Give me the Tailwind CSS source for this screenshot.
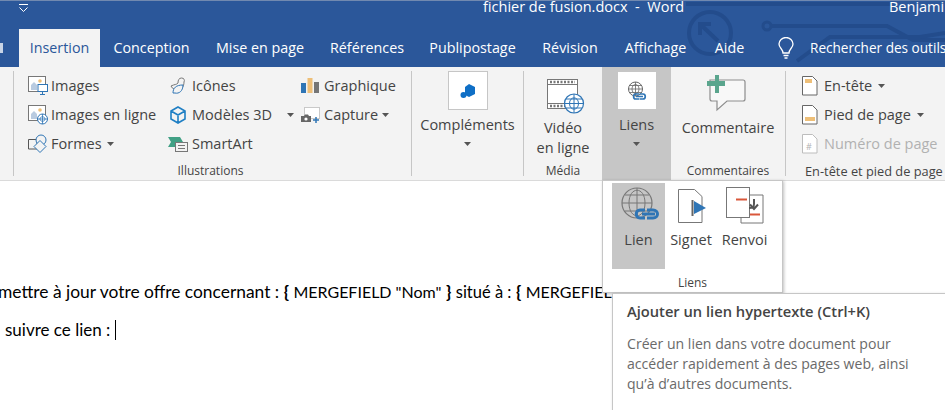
<!DOCTYPE html>
<html lang="fr">
<head>
  <meta charset="UTF-8">
  <title>fichier de fusion.docx - Word</title>
  <script src="https://cdn.jsdelivr.net/npm/@tailwindcss/browser@4"></script>
</head>
<body class="bg-white w-[945px] h-[410px] overflow-hidden relative [font-family:'Open_Sans',sans-serif] text-[14.500px] text-[#444]">

  <!-- Title bar + tabs -->
  <div class="relative h-[67px] bg-[#2b579a] border-t border-[#7189b0] overflow-hidden">
    <svg class="absolute left-[640px] top-0" width="305" height="66" fill="none" stroke="#234c8c" stroke-width="4">
      <circle cx="70" cy="32" r="21"/>
      <path d="M78 40 L60 23 M60 34 V23 H71" stroke-width="4"/>
      <circle cx="127" cy="25" r="4" stroke-width="3"/>
      <path d="M131 25 H247 L273 39 H305"/>
      <path d="M46 3 H250 M157 60 L190 36 H280 L305 32"/>
    </svg>
    <div class="relative flex h-[32px] -mt-[4px] text-white">
      <svg class="ml-[18px] mt-[7px] shrink-0" width="11" height="9" fill="none" stroke="#fff" stroke-width="1"><path d="M1 .5H10M1.500 3.500 5.500 7.500 9.500 3.500"/></svg>
      <div class="ml-[454px] w-[200px] whitespace-pre leading-[20px]">fichier de fusion.docx  -  Word</div>
      <div class="ml-[206px] whitespace-nowrap leading-[20px]">Benjamin</div>
    </div>
    <div class="relative flex h-[39px] text-white text-[14.300px] leading-[38px] whitespace-nowrap">
      <div class="w-[3px] shrink-0 mt-[14px] h-[10px] bg-[#c8d4e6]"></div>
      <div class="ml-[16px] w-[81px] shrink-0 h-[39px] bg-[#f3f3f3] text-[#2b579a] text-center">Insertion</div>
      <div class="w-[103px] shrink-0 text-center">Conception</div>
      <div class="w-[114px] shrink-0 text-center">Mise en page</div>
      <div class="w-[100px] shrink-0 text-center">Références</div>
      <div class="w-[111px] shrink-0 text-center">Publipostage</div>
      <div class="w-[84px] shrink-0 text-center">Révision</div>
      <div class="w-[87px] shrink-0 text-center">Affichage</div>
      <div class="w-[61px] shrink-0 text-center">Aide</div>
      <svg class="ml-[17px] mt-[8px] shrink-0" width="18" height="23" fill="none" stroke="#fff" stroke-width="1.300"><path d="M6 16C6 12 2 11 2 7A7 6.500 0 0 1 16 7C16 11 12 12 12 16ZM6.500 18.500H11.500M7.500 21H10.500"/></svg>
      <div class="ml-[15px] shrink-0 text-[13.600px]">Rechercher des outils</div>
    </div>
  </div>

  <!-- Ribbon -->
  <div class="flex h-[114px] bg-[#f3f3f3] border-b border-[#dadada] whitespace-nowrap">
    <div class="w-[13px] py-[4px]"><div class="w-px h-full ml-[13px] bg-[#c6c6c6]"></div></div>

    <!-- Illustrations -->
    <div class="w-[399px] flex flex-col border-r border-[#c6c6c6] my-[4px]">
      <div class="flex h-[87px]">
        <div class="w-[140px] ml-[15px] flex flex-col">
          <div class="h-[29px] flex items-center gap-[3px]">
            <svg class="shrink-0" width="20" height="20" fill="none"><rect x=".5" y=".5" width="17" height="15" fill="#fff" stroke="#777"/><path d="M3 14V9l3-3 3 3v5Z" fill="#b9cbe0"/><circle cx="12" cy="5" r="1.800" fill="#eebf78"/><rect x="10" y="8.500" width="9.500" height="7" fill="#fff" stroke="#2f75b5"/><path d="M12 18.500h5M14.500 16v2" stroke="#2f75b5"/></svg>
            <span>Images</span>
          </div>
          <div class="h-[29px] flex items-center gap-[3px]">
            <svg class="shrink-0" width="20" height="20" fill="none"><rect x=".5" y=".5" width="17" height="15" fill="#fff" stroke="#777"/><path d="M3 14V9l3-3 3 3v5Z" fill="#b9cbe0"/><circle cx="12" cy="5" r="1.800" fill="#eebf78"/><circle cx="14.500" cy="14" r="5" fill="#fff" stroke="#2f75b5"/><path d="M9.500 14h10M14.500 9v10M12 14c0-3 5-3 5 0s-5 3-5 0" stroke="#2f75b5" stroke-width=".8"/></svg>
            <span>Images en ligne</span>
          </div>
          <div class="h-[29px] flex items-center gap-[3px]">
            <svg class="shrink-0" width="20" height="20" fill="none" stroke="#2f75b5"><path d="M.5 5.500H9V15H.5Z" stroke="#555"/><circle cx="13" cy="6" r="5" fill="#f3f3f3"/><path d="M12 6.500 18 12.500 12 18.500 6 12.500Z" fill="#f3f3f3"/></svg>
            <span>Formes</span>
            <svg class="ml-[2px]" width="7" height="4" fill="#555"><path d="M0 0H7L3.500 4Z"/></svg>
          </div>
        </div>
        <div class="w-[133px] flex flex-col">
          <div class="h-[29px] flex items-center gap-[4px]">
            <svg class="shrink-0" width="20" height="20" fill="none" stroke="#777"><path d="M3 10c4-2 5-1 7-3 0-3 1-5 3.500-5S17 4 16 6c0 5-3 8-6 8-2 0-6-1-7-4Z"/><path d="M5 17c0-5 3-8 10-8 0 6-4 9-8 8Z" fill="#f3f3f3" stroke="#2f75b5"/></svg>
            <span>Icônes</span>
          </div>
          <div class="h-[29px] flex items-center gap-[4px]">
            <svg class="shrink-0" width="20" height="20" fill="none" stroke="#1f7fc4" stroke-width="1.600"><path d="M10 2 17 6V14L10 18 3 14V6ZM3 6 10 10 17 6M10 10V18"/></svg>
            <span>Modèles 3D</span>
            <svg class="ml-[11px]" width="7" height="4" fill="#555"><path d="M0 0H7L3.500 4Z"/></svg>
          </div>
          <div class="h-[29px] flex items-center gap-[4px]">
            <svg class="shrink-0" width="20" height="20" fill="none"><path d="M0 3H12L15 8 12 13H0L3 8Z" fill="#41a085"/><rect x="7.500" y="8.500" width="12" height="9" fill="#f3f3f3" stroke="#777"/><path d="M10 11.500H17M10 14.500H17" stroke="#777"/></svg>
            <span>SmartArt</span>
          </div>
        </div>
        <div class="flex flex-col">
          <div class="h-[29px] flex items-center gap-[3px]">
            <svg class="shrink-0" width="20" height="20"><rect x="0" y="7" width="5" height="10" fill="#2f75b5"/><rect x="6.500" y="2" width="5" height="15" fill="#eebf78"/><rect x="13" y="6" width="5" height="11" fill="#767676"/></svg>
            <span>Graphique</span>
          </div>
          <div class="h-[29px] flex items-center gap-[3px]">
            <svg class="shrink-0" width="20" height="20" fill="none"><rect x="3.500" y="2.500" width="15" height="11" fill="#fff" stroke="#999" stroke-dasharray="1 1"/><path d="M0 11H3L4 9.500H7L8 11H10V17H0Z" fill="#666"/><circle cx="5" cy="14" r="1.600" fill="#fff"/><path d="M12 15H18M15 12V18" stroke="#2f75b5" stroke-width="1.500"/></svg>
            <span>Capture</span>
            <svg class="ml-[1px]" width="7" height="4" fill="#555"><path d="M0 0H7L3.500 4Z"/></svg>
          </div>
        </div>
      </div>
      <div class="text-center text-[12px] leading-[16px] mt-[5px] -ml-[3px]">Illustrations</div>
    </div>

    <!-- Compléments -->
    <div class="w-[112px] flex flex-col items-center border-r border-[#c6c6c6] my-[4px]">
      <div class="w-[40px] h-[39px] bg-white border border-[#c6c6c6] flex items-center justify-center">
        <svg width="18" height="18" fill="#0f6fc6"><path d="M10 2 16 5V12L10 15 6 13V5Z"/><circle cx="4.500" cy="13" r="3"/></svg>
      </div>
      <div class="mt-[5px] leading-[20px]">Compléments</div>
      <svg class="mt-[7px]" width="7" height="4" fill="#555"><path d="M0 0H7L3.500 4Z"/></svg>
    </div>

    <!-- Média -->
    <div class="w-[78px] flex flex-col items-center my-[4px]">
      <svg class="mt-[8px] ml-[5px] shrink-0" width="38" height="38" fill="none"><rect x=".5" y=".5" width="30" height="29" fill="#fff" stroke="#777"/><path d="M.5 5.500H30.500M.5 24.500H30.500" stroke="#777"/><path d="M3 3H28M3 27H28" stroke="#777" stroke-width="2.500" stroke-dasharray="2 1.500"/><circle cx="27" cy="24.500" r="9.500" fill="#fff" stroke="#2f75b5" stroke-width="1.200"/><path d="M17.500 24.500H36.500M27 15V34M22.500 24.500C22.500 17 31.500 17 31.500 24.500S22.500 32 22.500 24.500M19 20H35M19 29H35" stroke="#2f75b5"/></svg>
      <div class="leading-[20px] text-center mt-[1px] shrink-0">Vidéo<br>en ligne</div>
      <div class="text-[12px] leading-[16px] mt-[5px] shrink-0">Média</div>
    </div>

    <!-- Liens (pressed) -->
    <div class="w-[69px] flex flex-col items-center bg-[#c6c6c6]">
      <div class="w-[38px] h-[37px] mt-[5px] bg-white flex items-center justify-center">
        <svg width="20" height="20" fill="none"><circle cx="8.500" cy="8" r="7" stroke="#666"/><path d="M1.500 8H15.500M8.500 1V15M5 8C5 2 12 2 12 8S5 14 5 8M2.500 4.500H14.500M2.500 11.500H14.500" stroke="#666" stroke-width=".8"/><path d="M12 13H8.500C6 13 6 18 8.500 18H12M12.500 13H16C19 13 19 18 16 18H12.500M9 15.500H16" stroke="#2f75b5" stroke-width="1.700"/></svg>
      </div>
      <div class="mt-[6px] leading-[20px]">Liens</div>
      <svg class="mt-[7px]" width="7" height="4" fill="#555"><path d="M0 0H7L3.500 4Z"/></svg>
    </div>

    <!-- Commentaires -->
    <div class="w-[115px] flex flex-col items-center border-r border-[#c6c6c6] my-[4px]">
      <svg class="mt-[3px] -ml-[3px] shrink-0" width="40" height="40" fill="none"><path d="M3 6H36Q38 6 38 8V25Q38 27 36 27H20L10 36V27H5Q3 27 3 25Z" fill="#f8f8f8" stroke="#8d8d8d" stroke-width="1.200"/><path d="M12 0H8V6H0V11H8V18H12V11H18V6H12Z" transform="translate(0 1)" fill="#5aa58d"/></svg>
      <div class="mt-[4px] leading-[20px]">Commentaire</div>
      <div class="text-[12px] leading-[16px] mt-[25px]">Commentaires</div>
    </div>

    <!-- En-tête et pied de page -->
    <div class="flex-1 flex flex-col my-[4px] pl-[16px]">
      <div class="h-[87px] flex flex-col">
        <div class="h-[29px] flex items-center gap-[6px]">
          <svg class="shrink-0" width="16" height="20" fill="none"><path d="M.5.5H10.500L15 5V19H.5Z" fill="#fff" stroke="#666"/><rect x="3" y="3" width="7" height="4" fill="#eebf78"/></svg>
          <span>En-tête</span>
          <svg width="7" height="4" fill="#555"><path d="M0 0H7L3.500 4Z"/></svg>
        </div>
        <div class="h-[29px] flex items-center gap-[6px]">
          <svg class="shrink-0" width="16" height="20" fill="none"><path d="M.5.5H10.500L15 5V19H.5Z" fill="#fff" stroke="#666"/><rect x="3" y="12" width="10" height="4" fill="#eebf78"/></svg>
          <span>Pied de page</span>
          <svg width="7" height="4" fill="#555"><path d="M0 0H7L3.500 4Z"/></svg>
        </div>
        <div class="h-[29px] flex items-center gap-[6px] text-[#b1b1b1]">
          <svg class="shrink-0" width="16" height="20" fill="none"><path d="M.5.5H10.500L15 5V19H.5Z" fill="#fff" stroke="#bdbdbd"/><text x="4" y="16" font-size="9" fill="#b1b1b1">#</text></svg>
          <span>Numéro de page</span>
        </div>
      </div>
      <div class="text-[12.800px] leading-[16px] mt-[5px] ml-[3px]">En-tête et pied de page</div>
    </div>
  </div>

  <!-- Document -->
  <div class="[font-family:Lato,sans-serif] text-[17px] text-black whitespace-nowrap">
    <div class="mt-[101px] -ml-[2px] text-[17.400px] leading-[20px]">mettre à jour votre offre concernant : <b>{</b> <span class="text-[16px]">MERGEFIELD "Nom"</span> <b>}</b> <span class="text-[16.500px]">situé à :</span> <b>{</b> <span class="text-[16px]">MERGEFIELD</span></div>
    <div class="mt-[18px] ml-[5px] leading-[20px] flex">suivre ce lien :<span class="ml-[5px] w-px h-[20px] bg-black"></span></div>
  </div>

  <!-- Liens dropdown -->
  <div class="absolute left-[602px] top-[180px] w-[181px] h-[113px] bg-white border border-[#c6c6c6] shadow-[1px_1px_3px_rgba(0,0,0,0.25)] px-[9px] pt-[2px] flex flex-col">
    <div class="flex">
      <div class="w-[53px] h-[86px] bg-[#c6c6c6] flex flex-col items-center">
        <svg class="mt-[4px] ml-[4px]" width="40" height="38" fill="none"><circle cx="16" cy="16" r="15" stroke="#777" stroke-width="1.200"/><path d="M1 16H31M16 1V31M8 16C8 -1 24 -1 24 16S8 33 8 16M4 8H28M4 24H28" stroke="#777"/><path d="M24 23H19C14 23 14 31 19 31H24M26 23H32C38 23 38 31 32 31H26M21 27H34" stroke="#2f75b5" stroke-width="3"/></svg>
        <div class="leading-[20px] mt-[5px]">Lien</div>
      </div>
      <div class="w-[52px] flex flex-col items-center">
        <svg class="mt-[4px] ml-[4px]" width="30" height="38" fill="none"><path d="M.5 2.500H16.500L24 9.500V35.500H.5Z" fill="#fff" stroke="#777"/><path d="M14.500 13V29" stroke="#666" stroke-width="2"/><path d="M16 14 28 21 16 27Z" fill="#2f75b5"/></svg>
        <div class="leading-[20px] mt-[5px]">Signet</div>
      </div>
      <div class="w-[55px] flex flex-col items-center">
        <svg class="mt-[4px]" width="38" height="38" fill="none"><path d="M15 8H37V36H15Z" fill="#fff" stroke="#777"/><rect x=".5" y=".5" width="23" height="30" fill="#fff" stroke="#777"/><path d="M10 12.500H21M24 27.500H34" stroke="#d9573a" stroke-width="2"/><path d="M28 12V17C28 21 26 21 23 21M24 17.500 28 22 32 17.500" stroke="#555" stroke-width="2"/></svg>
        <div class="leading-[20px] mt-[5px]">Renvoi</div>
      </div>
    </div>
    <div class="text-center text-[12px] leading-[16px] mt-[6px]">Liens</div>
  </div>

  <!-- Tooltip -->
  <div class="absolute left-[612px] top-[293px] w-[340px] h-[130px] bg-white border border-[#c6c6c6] shadow-[1px_1px_3px_rgba(0,0,0,0.2)] pl-[14px] pt-[7px]">
    <div class="font-semibold text-[14.700px] text-[#444] leading-[20px] whitespace-nowrap">Ajouter un lien hypertexte (Ctrl+K)</div>
    <div class="mt-[13px] text-[14.100px] text-[#6a6a6a] leading-[20px] whitespace-nowrap">Créer un lien dans votre document pour<br>accéder rapidement à des pages web, ainsi<br>qu’à d’autres documents.</div>
  </div>
</body>
</html>
